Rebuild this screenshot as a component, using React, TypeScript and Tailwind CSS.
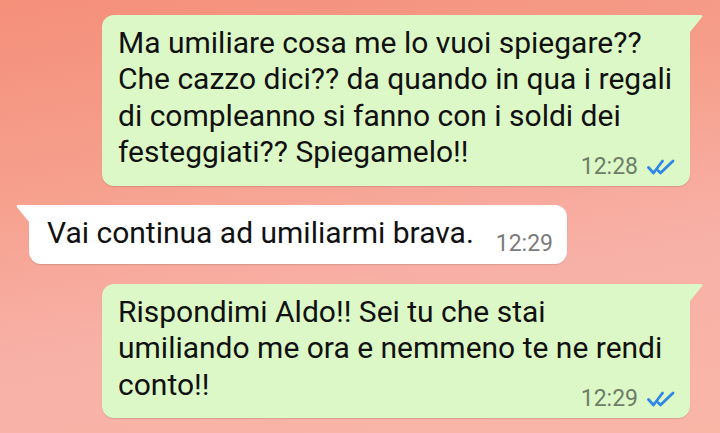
import React from 'react';

const Ticks = () => (
  <svg width="28" height="16" viewBox="0 0 28 16" fill="none" stroke="#2f88e4" strokeWidth="2.8" strokeLinecap="round" strokeLinejoin="round">
    <polyline points="1.5,8.5 6.5,14 15.5,2" />
    <polyline points="11,11.5 13.5,14 26,2" />
  </svg>
);

const OutTail = () => (
  <svg className="absolute left-full top-0" width="13" height="17" viewBox="0 0 13 17">
    <path d="M0 0 H10.5 Q13.5 0 11.8 2.4 L0 17 Z" fill="#dcf8c6" />
  </svg>
);

const InTail = () => (
  <svg className="absolute right-full top-0" width="13" height="17" viewBox="0 0 13 17">
    <path d="M13 0 H2.5 Q-0.5 0 1.2 2.4 L13 17 Z" fill="#ffffff" />
  </svg>
);

interface OutgoingProps {
  lines: string[];
  time: string;
}

const Outgoing: React.FC<OutgoingProps> = ({ lines, time }) => {
  const last = lines[lines.length - 1];
  return (
    <div className="relative ml-[102px] w-[588px] bg-[#dcf8c6] rounded-[12px] rounded-tr-none pl-[16px] pr-[15px] pt-[10px] pb-[8px] shadow-[0_1px_1px_rgba(0,0,0,0.12)]">
      <OutTail />
      {lines.slice(0, -1).map((l, i) => (
        <div key={i} className="leading-[36.4px]">{l}</div>
      ))}
      <div className="flex items-end justify-between">
        <span className="leading-[36.4px] mb-[7px]">{last}</span>
        <span className="flex items-center gap-[9px] text-[23px] leading-[22px] text-[#6c7d69]">
          {time}
          <Ticks />
        </span>
      </div>
    </div>
  );
};

export default function App() {
  return (
    <div className="w-[720px] h-[433px] overflow-hidden font-[Roboto,sans-serif] text-[30px] text-[#111111] bg-[linear-gradient(170deg,#f48f7a_0%,#f6a08d_35%,#f8b1a7_65%,#f9b6a7_100%)] pt-[15px] flex flex-col">
      <Outgoing
        lines={[
          'Ma umiliare cosa me lo vuoi spiegare??',
          'Che cazzo dici?? da quando in qua i regali',
          'di compleanno si fanno con i soldi dei',
          'festeggiati?? Spiegamelo!!',
        ]}
        time="12:28"
      />

      <div className="relative mt-[19px] ml-[29px] w-[538px] bg-white rounded-[12px] rounded-tl-none pl-[18px] pr-[14px] pt-[10px] pb-[9px] shadow-[0_1px_1px_rgba(0,0,0,0.12)]">
        <InTail />
        <div className="flex items-end justify-between">
          <span className="leading-[36.4px] mb-[4px]">Vai continua ad umiliarmi brava.</span>
          <span className="text-[23px] leading-[22px] text-[#7b7b7b]">12:29</span>
        </div>
      </div>

      <div className="mt-[20px]">
        <Outgoing
          lines={[
            'Rispondimi Aldo!! Sei tu che stai',
            'umiliando me ora e nemmeno te ne rendi',
            'conto!!',
          ]}
          time="12:29"
        />
      </div>
    </div>
  );
}
